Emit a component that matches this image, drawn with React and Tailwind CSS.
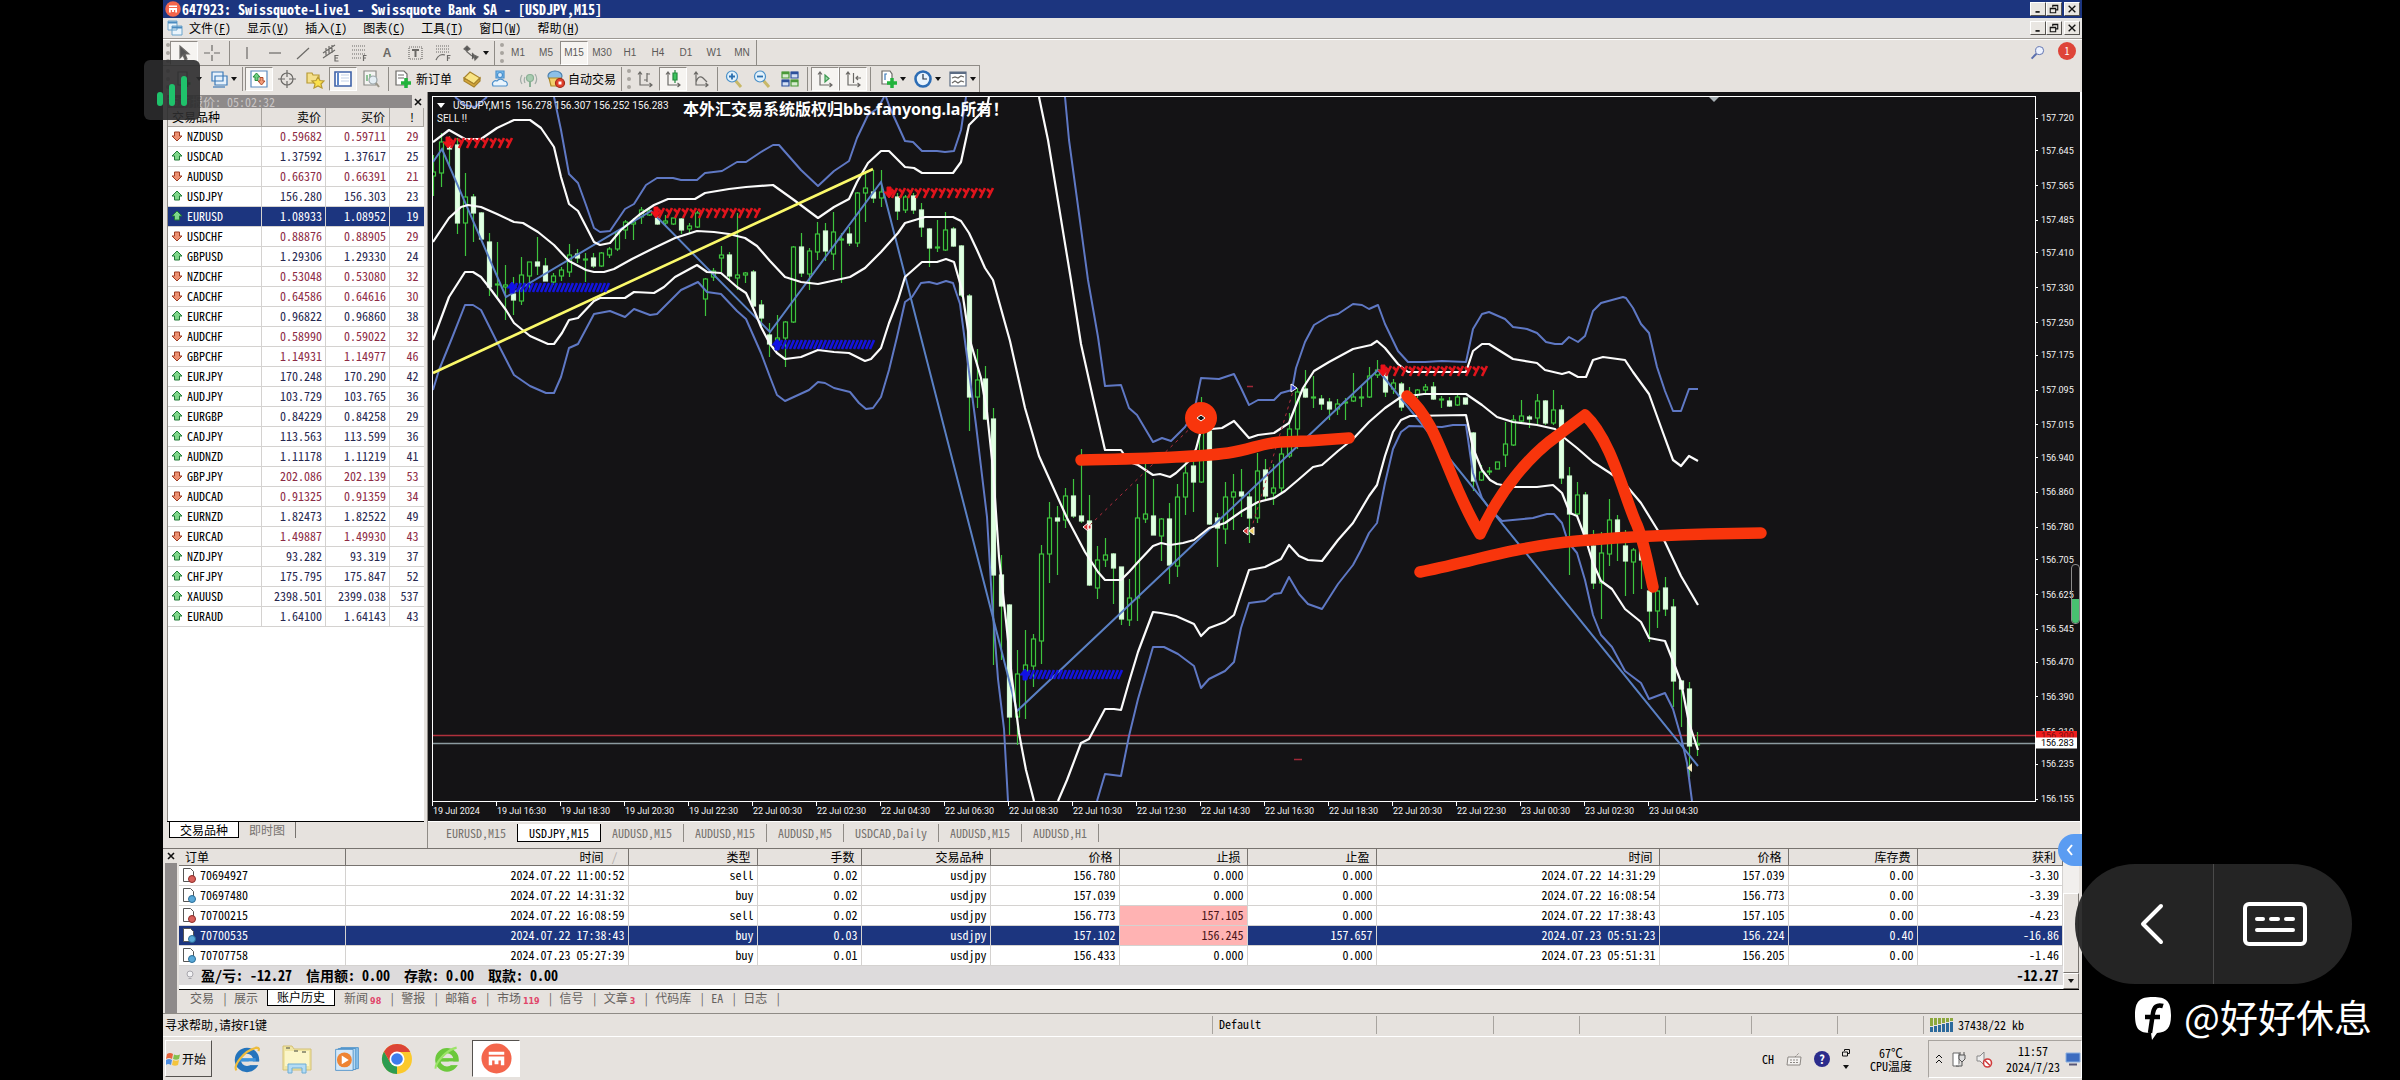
import React, { useState } from 'react';
import clsx from 'clsx';

const MONO = "font-['Noto_Sans_Mono_CJK_SC','Noto_Sans_CJK_SC',monospace]";

/* ---------- data ---------- */

const menus = [
  ['文件', 'F'], ['显示', 'V'], ['插入', 'I'], ['图表', 'C'], ['工具', 'T'], ['窗口', 'W'], ['帮助', 'H'],
];

const timeframes = ['M1', 'M5', 'M15', 'M30', 'H1', 'H4', 'D1', 'W1', 'MN'];

const quotes = [
  ['NZDUSD', '0.59682', '0.59711', 29, 'down'],
  ['USDCAD', '1.37592', '1.37617', 25, 'up'],
  ['AUDUSD', '0.66370', '0.66391', 21, 'down'],
  ['USDJPY', '156.280', '156.303', 23, 'up'],
  ['EURUSD', '1.08933', '1.08952', 19, 'up'],
  ['USDCHF', '0.88876', '0.88905', 29, 'down'],
  ['GBPUSD', '1.29306', '1.29330', 24, 'up'],
  ['NZDCHF', '0.53048', '0.53080', 32, 'down'],
  ['CADCHF', '0.64586', '0.64616', 30, 'down'],
  ['EURCHF', '0.96822', '0.96860', 38, 'up'],
  ['AUDCHF', '0.58990', '0.59022', 32, 'down'],
  ['GBPCHF', '1.14931', '1.14977', 46, 'down'],
  ['EURJPY', '170.248', '170.290', 42, 'up'],
  ['AUDJPY', '103.729', '103.765', 36, 'up'],
  ['EURGBP', '0.84229', '0.84258', 29, 'up'],
  ['CADJPY', '113.563', '113.599', 36, 'up'],
  ['AUDNZD', '1.11178', '1.11219', 41, 'up'],
  ['GBPJPY', '202.086', '202.139', 53, 'down'],
  ['AUDCAD', '0.91325', '0.91359', 34, 'down'],
  ['EURNZD', '1.82473', '1.82522', 49, 'up'],
  ['EURCAD', '1.49887', '1.49930', 43, 'down'],
  ['NZDJPY', '93.282', '93.319', 37, 'up'],
  ['CHFJPY', '175.795', '175.847', 52, 'up'],
  ['XAUUSD', '2398.501', '2399.038', 537, 'up'],
  ['EURAUD', '1.64100', '1.64143', 43, 'up'],
];

const chartTabs = [
  'EURUSD,M15', 'USDJPY,M15', 'AUDUSD,M15', 'AUDUSD,M15', 'AUDUSD,M5', 'USDCAD,Daily', 'AUDUSD,M15', 'AUDUSD,H1',
];

const orders = [
  ['70694927', '2024.07.22 11:00:52', 'sell', '0.02', 'usdjpy', '156.780', '0.000', '0.000', '2024.07.22 14:31:29', '157.039', '0.00', '-3.30'],
  ['70697480', '2024.07.22 14:31:32', 'buy', '0.02', 'usdjpy', '157.039', '0.000', '0.000', '2024.07.22 16:08:54', '156.773', '0.00', '-3.39'],
  ['70700215', '2024.07.22 16:08:59', 'sell', '0.02', 'usdjpy', '156.773', '157.105', '0.000', '2024.07.22 17:38:43', '157.105', '0.00', '-4.23'],
  ['70700535', '2024.07.22 17:38:43', 'buy', '0.03', 'usdjpy', '157.102', '156.245', '157.657', '2024.07.23 05:51:23', '156.224', '0.40', '-16.86'],
  ['70707758', '2024.07.23 05:27:39', 'buy', '0.01', 'usdjpy', '156.433', '0.000', '0.000', '2024.07.23 05:51:31', '156.205', '0.00', '-1.46'],
];

const orderHeads = ['订单', '时间', '类型', '手数', '交易品种', '价格', '止损', '止盈', '时间', '价格', '库存费', '获利'];

const terminalTabs = [
  ['交易'], ['展示'], ['账户历史'], ['新闻', 98], ['警报'], ['邮箱', 6], ['市场', 119], ['信号'], ['文章', 3], ['代码库'], ['EA'], ['日志'],
];

const prices = [
  157.72, 157.645, 157.565, 157.485, 157.41, 157.33, 157.25, 157.175, 157.095, 157.015, 156.94,
  156.86, 156.78, 156.705, 156.625, 156.545, 156.47, 156.39, 156.31, 156.235, 156.155,
];

const times = [
  '19 Jul 2024', '19 Jul 16:30', '19 Jul 18:30', '19 Jul 20:30', '19 Jul 22:30', '22 Jul 00:30', '22 Jul 02:30',
  '22 Jul 04:30', '22 Jul 06:30', '22 Jul 08:30', '22 Jul 10:30', '22 Jul 12:30', '22 Jul 14:30', '22 Jul 16:30',
  '22 Jul 18:30', '22 Jul 20:30', '22 Jul 22:30', '23 Jul 00:30', '23 Jul 02:30', '23 Jul 04:30',
];

// one row per bar: high, body top, body bottom, low, 1 = bearish (filled)
const candles = [
  [155, 172, 176, 196, 0], [133, 142, 173, 187, 0], [136, 146, 149, 165, 1], [138, 145, 223, 234, 1],
  [173, 197, 223, 256, 0], [194, 197, 213, 242, 1], [212, 213, 239, 240, 1], [233, 242, 287, 296, 1],
  [242, 284, 285, 297, 0], [265, 285, 287, 320, 0], [277, 294, 300, 315, 1], [257, 275, 301, 305, 0],
  [262, 262, 276, 290, 0], [237, 262, 266, 275, 1], [258, 266, 281, 281, 1], [273, 276, 282, 285, 0],
  [267, 270, 276, 281, 0], [244, 255, 272, 277, 0], [249, 254, 258, 263, 1], [253, 259, 260, 282, 0],
  [253, 258, 266, 268, 1], [252, 253, 266, 267, 0], [247, 249, 255, 258, 0], [230, 232, 249, 251, 0],
  [220, 222, 230, 239, 0], [218, 222, 224, 240, 0], [207, 210, 217, 224, 0], [207, 211, 215, 216, 0],
  [208, 217, 224, 225, 1], [215, 221, 223, 225, 0], [218, 218, 224, 225, 0], [218, 219, 230, 234, 1],
  [223, 226, 229, 234, 0], [211, 213, 227, 228, 0], [278, 279, 299, 316, 0], [268, 271, 277, 281, 0],
  [246, 255, 258, 272, 0], [252, 255, 276, 280, 1], [213, 275, 278, 290, 0], [272, 273, 275, 283, 0],
  [270, 272, 306, 307, 1], [300, 305, 318, 327, 1], [323, 335, 344, 357, 1], [315, 338, 340, 343, 0],
  [321, 322, 338, 367, 0], [246, 247, 322, 323, 0], [233, 247, 273, 277, 1], [248, 251, 274, 290, 0],
  [222, 234, 252, 260, 0], [223, 231, 251, 261, 1], [212, 232, 254, 270, 0], [233, 239, 240, 283, 0],
  [227, 234, 243, 246, 1], [192, 193, 243, 247, 0], [171, 188, 193, 222, 0], [170, 192, 198, 203, 1],
  [170, 192, 198, 207, 0], [187, 192, 194, 196, 0], [193, 197, 211, 220, 1], [195, 197, 210, 213, 0],
  [193, 196, 210, 214, 1], [203, 210, 227, 237, 1], [228, 229, 248, 267, 1], [220, 247, 248, 252, 0],
  [212, 230, 250, 251, 0], [227, 229, 246, 247, 1], [245, 246, 295, 297, 1], [294, 296, 397, 431, 1],
  [349, 380, 397, 408, 0], [366, 379, 419, 420, 1], [408, 419, 575, 665, 1], [555, 575, 606, 660, 1],
  [604, 605, 717, 735, 1], [650, 674, 717, 745, 0], [630, 665, 674, 719, 0], [634, 639, 666, 687, 0],
  [545, 554, 641, 664, 0], [502, 518, 554, 583, 0], [506, 518, 521, 575, 1], [488, 496, 520, 528, 0],
  [479, 496, 516, 518, 1], [449, 516, 521, 523, 1], [495, 521, 585, 586, 1], [546, 560, 588, 599, 0],
  [538, 555, 560, 567, 0], [553, 554, 568, 604, 1], [567, 567, 619, 625, 1], [579, 598, 620, 626, 0],
  [484, 518, 598, 621, 0], [459, 514, 519, 523, 0], [479, 516, 535, 535, 1], [518, 519, 536, 561, 0],
  [503, 519, 565, 584, 1], [484, 497, 566, 577, 0], [459, 473, 497, 515, 0], [456, 466, 482, 512, 1],
  [397, 422, 482, 483, 0], [429, 431, 524, 525, 1], [513, 518, 528, 567, 1], [482, 497, 529, 544, 0],
  [474, 492, 497, 530, 0], [469, 492, 496, 517, 1], [493, 497, 518, 543, 1], [453, 471, 518, 523, 0],
  [459, 470, 496, 501, 1], [464, 488, 493, 505, 0], [446, 454, 488, 494, 0], [413, 429, 456, 458, 0],
  [388, 392, 429, 449, 0], [370, 389, 397, 398, 1], [376, 397, 398, 408, 0], [395, 399, 404, 410, 1],
  [398, 402, 409, 420, 1], [399, 404, 409, 415, 0], [398, 402, 403, 420, 0], [373, 397, 401, 402, 0],
  [386, 397, 397, 407, 0], [367, 376, 397, 398, 0], [360, 370, 375, 378, 0], [369, 373, 392, 397, 1],
  [379, 383, 389, 394, 0], [382, 384, 407, 411, 1], [387, 393, 398, 399, 0], [389, 390, 395, 398, 0],
  [384, 387, 390, 394, 0], [382, 387, 399, 400, 1], [396, 399, 400, 408, 0], [397, 401, 406, 407, 1],
  [395, 397, 405, 406, 0], [398, 398, 404, 405, 1], [432, 433, 481, 491, 1], [465, 472, 480, 481, 0],
  [467, 471, 472, 475, 0], [462, 462, 469, 469, 0], [422, 444, 455, 467, 0], [415, 420, 445, 446, 0],
  [400, 416, 421, 422, 0], [415, 417, 419, 428, 1], [394, 401, 418, 424, 0], [400, 401, 423, 425, 1],
  [390, 410, 423, 425, 0], [405, 410, 478, 484, 1], [467, 476, 514, 575, 1], [482, 495, 514, 517, 0],
  [492, 495, 535, 537, 1], [530, 546, 583, 589, 1], [532, 553, 583, 619, 0], [499, 520, 554, 566, 0],
  [515, 520, 535, 561, 1], [530, 546, 561, 596, 1], [548, 550, 562, 594, 0], [549, 551, 560, 589, 1],
  [584, 591, 611, 642, 1], [589, 591, 611, 628, 0], [577, 588, 609, 616, 1], [599, 607, 681, 707, 1],
  [680, 681, 689, 727, 1], [682, 689, 746, 777, 1], [732, 744, 745, 756, 0],
];

const whiteBands = [
  '433,142 449,130 465,139 481,139 497,128 514,120 530,120 541,128 554,147 561,177 569,204 578,211 594,242 600,245 610,243 621,230 639,215 654,205 668,199 695,199 705,193 729,189 746,187 773,185 794,200 818,218 834,207 849,199 857,182 868,163 881,151 889,151 905,167 914,168 922,173 953,173 961,162 969,125 987,107 989,97',
  '1039,97 1048,140 1071,280 1081,344 1093,398 1105,450 1121,450 1129,462 1138,465 1153,475 1160,474 1170,477 1176,473 1189,461 1196,449 1201,430 1222,428 1234,421 1249,438 1258,435 1274,433 1289,423 1296,405 1303,388 1314,371 1329,362 1353,349 1371,345 1377,341 1385,348 1398,364 1408,372 1466,372 1473,351 1482,344 1489,344 1513,359 1537,363 1545,370 1562,374 1569,372 1578,377 1586,377 1593,360 1603,357 1625,360 1633,372 1649,394 1662,430 1673,460 1681,466 1689,456 1698,461',
  '433,242 449,218 461,207 468,205 481,207 497,214 514,222 523,223 538,232 554,245 569,261 586,270 594,272 604,272 614,269 632,259 654,248 675,238 697,231 714,232 729,234 745,238 757,246 770,261 785,277 801,282 818,284 841,279 850,277 865,268 881,252 898,233 905,223 925,217 953,217 961,221 969,233 977,250 985,268 993,280 1010,341 1025,408 1039,456 1067,518 1085,552 1098,572 1105,580 1121,580 1129,572 1138,562 1153,546 1161,543 1170,545 1183,543 1194,540 1209,528 1225,523 1242,511 1258,502 1274,498 1285,491 1298,480 1313,467 1322,465 1338,451 1353,439 1369,422 1385,408 1401,397 1424,394 1466,394 1482,405 1497,417 1513,422 1537,425 1555,429 1562,436 1577,448 1593,462 1610,473 1625,484 1641,503 1657,529 1665,542 1681,576 1698,605',
  '433,340 449,297 465,272 473,272 481,277 489,287 506,310 514,323 530,336 548,344 554,344 562,333 569,320 578,318 594,301 600,298 625,298 634,292 654,293 664,287 675,277 697,265 707,272 721,273 737,287 746,293 754,310 761,327 770,344 777,353 785,359 801,357 818,350 834,352 849,353 865,361 871,359 881,348 889,323 898,300 905,277 922,262 937,262 946,259 954,262 962,290 969,337 981,378 987,412 993,469 999,557 1006,621 1012,679 1019,733 1026,770 1034,801',
  '1058,801 1067,780 1081,743 1089,739 1105,709 1114,709 1121,710 1129,682 1138,652 1153,612 1161,613 1176,616 1194,624 1201,636 1209,628 1225,622 1234,615 1249,570 1265,567 1281,559 1289,545 1299,556 1308,560 1322,561 1338,540 1353,523 1369,496 1377,485 1385,456 1393,432 1401,420 1410,416 1466,415 1473,448 1482,470 1490,480 1497,484 1513,487 1537,487 1553,485 1562,493 1570,513 1577,516 1585,537 1593,563 1601,581 1612,589 1625,609 1641,622 1649,638 1665,641 1673,661 1681,682 1689,723 1698,750',
];

const blueBands = [
  '455,97 465,105 475,107 487,97',
  '554,97 561,130 569,174 578,183 586,205 594,228 600,232 610,231 625,209 634,204 646,185 657,178 673,178 681,180 697,180 705,173 722,171 737,162 746,162 761,152 773,145 779,145 801,170 818,186 834,171 849,161 857,138 868,115 878,108 884,97',
  '886,97 890,108 905,141 913,142 922,151 937,151 945,152 954,151 961,130 966,97',
  '1065,97 1069,140 1088,280 1098,337 1105,386 1121,385 1129,408 1137,415 1153,442 1162,438 1171,441 1185,427 1194,412 1201,378 1219,379 1234,374 1241,388 1249,405 1258,400 1274,400 1281,393 1292,390 1296,368 1305,342 1314,325 1329,316 1338,314 1353,304 1362,305 1369,309 1378,305 1385,324 1398,351 1408,362 1425,362 1442,361 1466,362 1473,329 1482,314 1489,312 1505,319 1513,327 1527,329 1537,333 1546,342 1555,344 1562,344 1569,337 1578,342 1585,336 1593,311 1601,303 1623,297 1626,298 1633,308 1641,324 1649,333 1657,367 1665,391 1673,411 1681,411 1689,389 1698,389',
  '433,390 439,370 452,338 465,305 473,305 481,310 497,342 514,375 530,386 546,393 554,393 561,377 569,348 578,344 594,314 610,311 625,317 634,309 650,315 657,314 681,290 698,282 707,292 721,294 737,311 746,319 761,353 770,377 777,395 785,401 809,390 818,382 825,383 834,388 850,392 859,403 866,409 873,408 881,397 889,370 897,337 905,302 912,297 921,283 929,282 937,284 946,281 953,283 960,304 968,364 976,425 987,517 992,601 998,679 1004,729 1008,801',
  '1097,801 1105,774 1121,776 1129,736 1138,699 1153,647 1164,647 1178,654 1194,666 1201,688 1209,679 1225,671 1234,662 1241,628 1249,603 1265,601 1274,594 1281,593 1289,577 1299,594 1308,604 1322,609 1338,584 1353,565 1361,550 1369,533 1377,523 1385,483 1393,449 1401,432 1409,426 1442,427 1453,425 1466,425 1470,453 1473,473 1482,498 1489,508 1502,521 1533,518 1547,514 1554,514 1562,523 1568,542 1577,553 1585,580 1593,615 1601,635 1612,647 1625,671 1641,683 1649,699 1657,696 1665,693 1673,709 1681,737 1687,763 1692,801',
];

const zigzag = '433,162 442,149 506,297 651,211 770,332 881,182 1017,711 1378,370 1698,766';

// signal trails: x, y, number of marks, colour
const trails = [
  [448, 143, 8, 'red'], [656, 213, 13, 'red'], [889, 193, 13, 'red'], [1383, 371, 13, 'red'],
  [512, 287, 12, 'blue'], [777, 344, 12, 'blue'], [1025, 674, 12, 'blue'],
];

const priceTop = (price) => `${(((157.72 - price) * 434 + 22) / 704) * 100}%`;

/* ---------- small pieces ---------- */

const Icon = ({ size = 'w-5 h-5', children }) => (
  <svg viewBox="0 0 20 20" className={clsx(size, 'shrink-0')} fill="none" stroke="#6b6966" strokeWidth="1.2">
    {children}
  </svg>
);

const Caret = () => (
  <svg viewBox="0 0 6 4" className="w-1.5 h-1 shrink-0"><path d="M0 0h6L3 4z" fill="#111" /></svg>
);

const Grip = () => <span className="w-[7px] h-5 shrink-0 border-r-4 border-dotted border-[#a8a49f]" />;

const Sep = ({ wide }) => (
  <span className={clsx('h-6 shrink-0 flex justify-center', wide ? 'w-[7px]' : 'w-[5px]')}>
    <i className="border-l border-[#8f8b86]" />
  </span>
);

const ToolButton = ({ label, active, caret, children }) => (
  <button
    aria-label={label}
    className={clsx(
      'shrink-0 h-6 flex items-center justify-center gap-0.5',
      caret ? 'w-[35px]' : 'w-7',
      active && 'bg-[#f6f4f1] border border-t-[#8f8b86] border-l-[#8f8b86] border-white'
    )}
  >
    {children}
    {caret && <Caret />}
  </button>
);

const WinButtons = () => (
  <div className="flex text-black">
    {[
      ['最小化', <path key="a" d="M3 9.500h5" strokeWidth="2" />],
      ['还原', <path key="b" d="M4.500 4V1.500H10.500V7H8M4.500 2h6M1.500 5H8v5.500H1.500zM1.500 5.500H8" />],
      ['关闭', <path key="c" d="M2 2l8 8M10 2l-8 8" strokeWidth="1.600" />],
    ].map(([label, glyph]) => (
      <button
        key={label}
        aria-label={label}
        className="w-4 h-3.5 last:ml-0.5 flex items-center justify-center bg-[#e9e6e2] border border-white border-r-[#55524f] border-b-[#55524f]"
      >
        <svg viewBox="0 0 12 12" className="w-2.5 h-2.5" fill="none" stroke="#111" strokeWidth="1.3">{glyph}</svg>
      </button>
    ))}
  </div>
);

const MetaLogo = ({ size }) => (
  <svg viewBox="0 0 32 32" className={size}>
    <circle cx="16" cy="16" r="15.500" fill="#f4664c" />
    <path d="M8 9h16v3H8zM8 14h16v9h-3.500v-5H18v4h-4v-4h-2.500v5H8z" fill="#fff" />
  </svg>
);

const DirArrow = ({ dir }) => (
  <svg viewBox="0 0 12 12" className="w-3 h-3">
    {dir === 'up' ? (
      <path d="M6 1l5 5H8.500v4h-5V6H1z" fill="#7fd88a" stroke="#1f7a35" />
    ) : (
      <path d="M6 11L1 6h2.500V2h5v4H11z" fill="#ee9070" stroke="#9c3b22" />
    )}
  </svg>
);

const OrderIcon = ({ buy }) => (
  <svg viewBox="0 0 14 16" className="w-3.5 h-4 shrink-0">
    <path d="M1.500 1.500h7l3 3v10h-10z" fill="#fff" stroke="#555" />
    <circle cx="10" cy="12" r="3.500" fill={buy ? '#58a8d8' : '#d8605a'} stroke={buy ? '#2a6c96' : '#8c2b26'} />
  </svg>
);

/* ---------- window chrome ---------- */

const TitleBar = () => (
  <div className="h-[18px] bg-[#1c357f] flex items-center justify-between pl-0.5 pr-0.5">
    <div className="flex items-center text-white">
      <MetaLogo size="w-4 h-4" />
      <h1 className="pl-px text-sm leading-[18px] font-bold whitespace-pre">647923: Swissquote-Live1 - Swissquote Bank SA - [USDJPY,M15]</h1>
    </div>
    <WinButtons />
  </div>
);

const MenuBar = () => (
  <div className="h-[21px] bg-[#e6e4e2] border-b border-[#9c9893] flex items-center justify-between pl-1 pr-0.5">
    <nav className="flex items-center gap-4">
      <svg viewBox="0 0 16 16" className="w-4 h-4 -mr-2.5">
        <path d="M1 1h9v9H1zM5 6h10v9H5z" fill="#eaf4fb" stroke="#6aa4cc" />
        <path d="M1 2.500h9M5 7.500h10" stroke="#4c8cc0" strokeWidth="2" />
      </svg>
      {menus.map(([name, key]) => (
        <button key={key} className="text-xs">{name}(<u>{key}</u>)</button>
      ))}
    </nav>
    <WinButtons />
  </div>
);

const DrawToolbar = () => (
  <div className="h-[26px] flex items-center justify-between border-t border-white">
    <div className="flex items-center h-[26px] border-r border-[#8f8b86]">
      <Grip />
      <ToolButton label="光标" active><Icon><path d="M6 3v12l3-3 2 5 2-1-2-5h4z" fill="#555" /></Icon></ToolButton>
      <ToolButton label="十字准线"><Icon><path d="M10 2v6M10 12v6M2 10h6M12 10h6" /></Icon></ToolButton>
      <Sep wide />
      <ToolButton label="垂直线"><Icon><path d="M10 4v12" /></Icon></ToolButton>
      <ToolButton label="水平线"><Icon><path d="M4 10h12" /></Icon></ToolButton>
      <ToolButton label="趋势线"><Icon><path d="M4 16L16 5" /></Icon></ToolButton>
      <ToolButton label="通道">
        <Icon><path d="M2 10l12-8M2 15l12-8M5 5v9M8 3v9M11 2v8M17.500 12.500h-3.500v5.500h3.500M14 15h3" /></Icon>
      </ToolButton>
      <ToolButton label="斐波那契">
        <Icon><path d="M3 3h14M3 7h14M3 11h14M3 15h9" strokeDasharray="1 1" /><path d="M14.500 18v-5.500h3M14.500 15h2.500" /></Icon>
      </ToolButton>
      <ToolButton label="文字"><span className="font-['Liberation_Sans',sans-serif] font-bold text-xs text-[#6b6966]">A</span></ToolButton>
      <ToolButton label="文本标签">
        <Icon><path d="M4 4h13v12H4z" strokeDasharray="1 1" /><path d="M7 7h7M10.500 7v7" strokeWidth="2" /></Icon>
      </ToolButton>
      <ToolButton label="斐波扇形">
        <Icon><path d="M3 3h14M3 6h14M3 9h14" strokeDasharray="1 1" /><path d="M3 17c2-5 6-6 9-5M14.500 18v-5.500h3M14.500 15h2.500" /></Icon>
      </ToolButton>
      <ToolButton label="箭头" caret>
        <Icon><path d="M3 6l3-3 3 3-3 2zM5 8l6 5M11 10l3 3-3 3M13 12l4 2-3 3z" fill="#555" /></Icon>
      </ToolButton>
      <Sep />
      <Grip />
      {timeframes.map((tf) => (
        <button
          key={tf}
          className={clsx(
            "w-7 h-6 shrink-0 font-['Liberation_Sans',sans-serif] text-[10px] text-[#5c5a58]",
            tf === 'M15' && 'bg-[#f6f4f1] border border-t-[#8f8b86] border-l-[#8f8b86] border-white'
          )}
        >
          {tf}
        </button>
      ))}
    </div>
    <div className="flex items-center gap-3 pr-1.5">
      <button aria-label="搜索">
        <Icon size="w-4 h-4"><circle cx="12" cy="7" r="5" stroke="#5b6fae" fill="#eef3ff" /><path d="M8 11l-6 6" stroke="#5b6fae" strokeWidth="2.500" /></Icon>
      </button>
      <button aria-label="通知" className="w-[18px] h-[18px] mb-1 rounded-full bg-[#de4438] text-white text-[10px] leading-4">1</button>
    </div>
  </div>
);

const MainToolbar = () => (
  <div className="h-[27px] flex items-center">
    <div className="flex items-center h-[27px] border-t border-r border-[#8f8b86]">
      <Grip />
      <ToolButton label="新图表" caret><Icon><path d="M4 3h9v13H4z" fill="#fff" /><path d="M13 11v7M9.500 14.500h7" stroke="#20a040" strokeWidth="2.500" /></Icon></ToolButton>
      <ToolButton label="配置文件" caret>
        <Icon><path d="M3 3h11v9H3zM6 7h12v9H6z" fill="#e6f1fb" stroke="#3c7ab8" /><path d="M4 18h12" stroke="#3c7ab8" /></Icon>
      </ToolButton>
      <Sep />
      <ToolButton label="市场报价" active>
        <Icon><path d="M2 2h16v16H2z" fill="#fff" stroke="#5a8ac0" /><path d="M7.500 4l3.500 4H9v3.500H6V8H4z" fill="#6cd080" stroke="#2a8a3c" strokeWidth="1" /><path d="M12.500 16L9 12h2V8.500h3V12h2z" fill="#f09c78" stroke="#b04c2c" strokeWidth="1" /></Icon>
      </ToolButton>
      <ToolButton label="数据窗口"><Icon><circle cx="10" cy="10" r="6" /><path d="M10 1v7M10 12v7M1 10h7M12 10h7" /></Icon></ToolButton>
      <ToolButton label="导航">
        <Icon><path d="M2 4h5l1 2h6v8H2z" fill="#f5e08c" stroke="#b89a34" /><path d="M13 8l2 3.500 4 .5-3 3 1 4-4-2-4 2 1-4-3-3 4-.5z" fill="#fbe04c" stroke="#b89a34" /></Icon>
      </ToolButton>
      <ToolButton label="终端" active><Icon><path d="M2 3h16v14H2z" fill="#fff" stroke="#3f62a8" strokeWidth="1.600" /><path d="M5 4v12" stroke="#5c86c8" strokeWidth="2" /><path d="M8 6h8M8 9h8M8 12h8" stroke="#c4d2e8" /></Icon></ToolButton>
      <ToolButton label="策略测试">
        <Icon><path d="M3 2h12v14H3z" fill="#f4f4f2" stroke="#8a8a86" /><path d="M6 12V6M9 10V5" stroke="#48a058" /><circle cx="12" cy="11" r="4" fill="#e4eef4" stroke="#9aa4a8" /><path d="M15 14l3 4" stroke="#9a9688" strokeWidth="2" /></Icon>
      </ToolButton>
      <Sep wide />
      <button className="flex items-center h-6 w-[66px] text-xs whitespace-nowrap">
        <Icon><path d="M4 2h8l3 3v11H4z" fill="#fff" /><path d="M6 6h6M6 9h6" /><path d="M14 9v10M9 14h10" stroke="#22b33c" strokeWidth="3.500" /></Icon>
        <span className="pl-1">新订单</span>
      </button>
      <ToolButton label="编辑器"><Icon><path d="M2 9l6-6 10 6-6 6z" fill="#f9e484" stroke="#a8842c" /><path d="M2 9v3l10 6 6-6V9l-6 6z" fill="#d8a83c" stroke="#a8842c" /></Icon></ToolButton>
      <ToolButton label="虚拟主机"><Icon><path d="M6 2h8v7H6z" fill="#7cc0f0" stroke="#4c90cc" /><circle cx="10" cy="6" r="2.500" fill="#dcecfa" stroke="#4c90cc" /><path d="M3 17c-2-4 2-6 4-5 2-3 6-2 7 0 4 0 4 5 2 5z" fill="#eaf5fd" stroke="#4c90cc" /></Icon></ToolButton>
      <ToolButton label="信号"><Icon><path d="M4 6c-2 3-2 6 0 9M7 8c-1 2-1 4 0 6M17 5c2 3 2 7 0 10" stroke="#a0aca6" /><circle cx="12" cy="9" r="3.500" fill="#a8ccb0" stroke="#8ab094" /><path d="M12 12v6" stroke="#8ab094" strokeWidth="2" /></Icon></ToolButton>
      <button className="flex items-center h-6 w-[77px] pl-1 text-xs whitespace-nowrap">
        <Icon><ellipse cx="9" cy="7" rx="7" ry="5" fill="#8cc0e8" stroke="#4a80b0" /><path d="M3 9h12l-2 8H5z" fill="#f2d06c" stroke="#b08a28" /><circle cx="14" cy="14" r="4.500" fill="#e0402c" stroke="#a02818" /><path d="M12.500 12.500h3v3h-3z" fill="#fff" stroke="none" /></Icon>
        <span className="pl-0.5">自动交易</span>
      </button>
      <Sep />
      <Grip />
      <ToolButton label="柱状图"><Icon><path d="M5 3v13h12M3 5.500l2-2.500 2 2.500M14.500 14l2.500 2-2.500 2M12 4v9M12 5h3M9 11h3" /></Icon></ToolButton>
      <ToolButton label="蜡烛图" active><Icon><path d="M5 3v13h12M3 5.500l2-2.500 2 2.500M14.500 14l2.500 2-2.500 2" /><path d="M12 1v13" stroke="#22883c" /><path d="M10 4h4v7h-4z" fill="#3cc45c" stroke="#22883c" /></Icon></ToolButton>
      <ToolButton label="折线图"><Icon><path d="M5 3v13h12M3 5.500l2-2.500 2 2.500M14.500 14l2.500 2-2.500 2M5 13c2-6 5-6 7-4l4 4" /></Icon></ToolButton>
      <Sep />
      <ToolButton label="放大"><Icon><path d="M11 11l6 7" stroke="#c8b868" strokeWidth="3" /><circle cx="8" cy="7.500" r="5.500" fill="#e2f1fb" stroke="#4a90c8" /><path d="M5 7.500h6M8 4.500v6" stroke="#2c70b0" strokeWidth="1.800" /></Icon></ToolButton>
      <ToolButton label="缩小"><Icon><path d="M11 11l6 7" stroke="#c8b868" strokeWidth="3" /><circle cx="8" cy="7.500" r="5.500" fill="#e2f1fb" stroke="#4a90c8" /><path d="M5 7.500h6" stroke="#2c70b0" strokeWidth="1.800" /></Icon></ToolButton>
      <ToolButton label="平铺窗口">
        <Icon><path d="M2 3h7v6H2zM11 11h7v6h-7z" fill="#d8ecd0" stroke="#4a9838" /><path d="M11 3h7v6h-7zM2 11h7v6H2z" fill="#d4e0f4" stroke="#2c509c" /><path d="M2 4h7M11 12h7" stroke="#4a9838" strokeWidth="2.500" /><path d="M11 4h7M2 12h7" stroke="#2c509c" strokeWidth="2.500" /></Icon>
      </ToolButton>
      <Sep wide />
      <ToolButton label="自动滚动" active><Icon><path d="M5 3v13h12M3 5.500l2-2.500 2 2.500M14.500 14l2.500 2-2.500 2" /><path d="M10 6l4 3.500-4 3.500z" fill="#9cd8a8" stroke="#3c9850" /></Icon></ToolButton>
      <ToolButton label="图表平移" active><Icon><path d="M5 3v13h12M3 5.500l2-2.500 2 2.500M14.500 14l2.500 2-2.500 2M10.500 4v10M18 9h-5M15 7l-2 2 2 2" /></Icon></ToolButton>
      <Sep wide />
      <ToolButton label="技术指标" caret><Icon><path d="M4 2h8l2 3v10H4z" fill="#fff" /><path d="M9 5H7v6" stroke="#3c7ab8" /><path d="M14 9v10M9 14h10" stroke="#22b33c" strokeWidth="3.500" /></Icon></ToolButton>
      <ToolButton label="时间周期" caret><Icon><circle cx="10" cy="10" r="7.500" fill="#e8f3fc" stroke="#2c6cb4" strokeWidth="2.600" /><path d="M10 5v5h4" stroke="#234" /></Icon></ToolButton>
      <ToolButton label="模板" caret><Icon><path d="M2 3h16v14H2z" fill="#fff" stroke="#5c6c84" /><path d="M2 4h16" stroke="#5c6c84" strokeWidth="2" /><path d="M4 9l3-1 3 1 3-2 3 1M4 14l3-2 3 2 3-2 3 1" /></Icon></ToolButton>
    </div>
  </div>
);

/* ---------- market watch ---------- */

const MarketWatch = () => {
  const [selected, setSelected] = useState('EURUSD');

  return (
    <section className="w-[265px] shrink-0 flex flex-col pl-1 pr-[3px] pt-[3px] pb-1 border-r border-[#8f8b86]">
      <div className="flex items-center h-[13px]">
        <h2 className="flex-1 bg-[#8e8a8a] text-[#c9c5c5] text-xs leading-[13px] whitespace-pre">市场报价: 05:02:32</h2>
        <button aria-label="关闭" className="w-3 flex justify-center">
          <svg viewBox="0 0 8 8" className="w-2 h-2"><path d="M1 1l6 6M7 1L1 7" stroke="#111" strokeWidth="1.600" /></svg>
        </button>
      </div>
      <div className="flex-1 bg-white border-l border-[#8f8b86]">
        <table className="w-full table-fixed text-xs leading-none">
          <colgroup>
            <col />
            <col className="w-16" />
            <col className="w-16" />
            <col className="w-[34px]" />
          </colgroup>
          <thead>
            <tr className="h-[18px] bg-[#e6e2de]">
              <th className="font-normal text-left pl-1 border-r border-b border-[#a8a49f]">交易品种</th>
              <th className="font-normal text-right pr-1 border-r border-b border-[#a8a49f]">卖价</th>
              <th className="font-normal text-right pr-1 border-r border-b border-[#a8a49f]">买价</th>
              <th className="font-normal text-right pr-2 border-r border-b border-[#a8a49f]">!</th>
            </tr>
          </thead>
          <tbody>
            {quotes.map(([symbol, bid, ask, spread, dir]) => {
              const active = symbol === selected;
              return (
                <tr
                  key={symbol}
                  onClick={() => setSelected(symbol)}
                  className={clsx(
                    'h-5 border-b border-[#d4d2d0]',
                    active ? 'bg-[#1c357f] text-white' : dir === 'up' ? 'text-[#26264e]' : 'text-[#8c2a44]'
                  )}
                >
                  <td className="border-r border-[#d4d2d0]">
                    <span className={clsx('flex items-center gap-1 pl-[3px]', !active && 'text-black')}>
                      <DirArrow dir={dir} />
                      {symbol}
                    </span>
                  </td>
                  <td className="text-right pr-[3px] border-r border-[#d4d2d0]">{bid}</td>
                  <td className="text-right pr-[3px] border-r border-[#d4d2d0]">{ask}</td>
                  <td className="text-right pr-[5px]">{spread}</td>
                </tr>
              );
            })}
          </tbody>
        </table>
      </div>
      <div className="flex items-start h-[23px] border-t border-black text-xs">
        <button className="h-4 px-2.5 ml-0.5 bg-white border border-t-0 border-black leading-[14px]">交易品种</button>
        <button className="h-4 px-2.5 leading-4 text-[#77736f] border-r border-[#77736f]">即时图</button>
      </div>
    </section>
  );
};

/* ---------- chart ---------- */

const Trail = ({ x, y, count, color }) => {
  const red = color === 'red';
  return (
    <g transform={`translate(${x} ${y})`} stroke={red ? '#e0141c' : '#1414dc'} strokeWidth="2.600" fill="none">
      <path d={red ? 'M-5 -1h3v-5h4v5h3L0 5z' : 'M-5 1h3v5h4v-5h3L0 -5z'} fill={red ? '#f01018' : '#1010e8'} strokeWidth="1" />
      {Array.from({ length: count }, (_, i) => (
        <path key={i} d={red ? `M${2 + i * 8} -4l3 3M${8 + i * 8} -5l-5 10` : `M${1 + i * 8} 5l4 -9M${5 + i * 8} 5l4 -9`} />
      ))}
    </g>
  );
};

const PriceChart = () => (
  <svg viewBox="433 97 1602 704" preserveAspectRatio="none" className="absolute inset-0 w-full h-full" fill="none">
    <path d="M433 735.500H2035" stroke="#b0303c" strokeWidth="1.500" />
    <path d="M433 743.500H2035" stroke="#8c9aa0" strokeWidth="1.500" />
    <g strokeWidth="1.200">
      {candles.map(([high, top, bottom, low, filled], i) => {
        const x = 433.5 + i * 8;
        return (
          <g key={i} stroke="#3ec43e">
            <path d={`M${x} ${high}V${top}M${x} ${bottom}V${low}`} />
            <rect x={x - 2} y={top} width="4" height={Math.max(bottom - top, 1)} fill={filled ? '#e2ffe4' : '#0b1a0d'} stroke={filled ? '#d0f8d2' : '#3ec43e'} />
          </g>
        );
      })}
    </g>
    <g stroke="#5f78c4" strokeWidth="2" strokeLinejoin="round">
      {blueBands.map((points) => <polyline key={points} points={points} />)}
    </g>
    <polyline points={zigzag} stroke="#5a80c4" strokeWidth="2" />
    <g stroke="#fbfbfb" strokeWidth="2.200" strokeLinejoin="round">
      {whiteBands.map((points) => <polyline key={points} points={points} />)}
    </g>
    <path d="M433 373L873 169" stroke="#fbf96a" strokeWidth="2.600" />
    {trails.map(([x, y, count, color]) => <Trail key={`${x}-${y}`} x={x} y={y} count={count} color={color} />)}
    <path d="M1090 525L1153 464L1201 418M1251 530L1294 388" stroke="#b02c3c" strokeDasharray="3 4" />
    <path d="M1247 386.500h6M1294 759.500h8" stroke="#a02838" strokeWidth="1.500" />
    <path d="M1083 527l5-4v8zM1088 525h3v4h-3z" fill="#d83030" stroke="#fff" />
    <path d="M1243 531l5-4v8z" fill="#d83030" stroke="#fff" />
    <path d="M1249 531l5-4v8z" fill="#f0d060" stroke="#fff" />
    <path d="M1297 388l-6-4v8z" fill="#3040d0" stroke="#fff" />
    <path d="M1687 768l5-5v9z" fill="#f4ecc0" />
    <path d="M1709 97h10l-5 5z" fill="#a8b0b4" />
    {/* hand-drawn marks */}
    <g stroke="#f8350c" strokeWidth="11.500" strokeLinecap="round" strokeLinejoin="round">
      <path d="M1081 460C1128 459 1190 458 1228 453C1250 450 1262 443 1280 442L1308 441L1349 438" />
      <path d="M1407 396C1440 425 1445 475 1480 534C1500 490 1530 455 1557 436L1585 415C1612 440 1625 500 1637 525C1645 545 1648 565 1653 587" />
      <path d="M1420 572C1470 562 1520 546 1577 541C1610 538 1680 534 1761 533" />
    </g>
    <circle cx="1201" cy="418" r="16" fill="#f8350c" />
    <path d="M1197 418l4-3 4 3-4 3z" fill="#111" stroke="#fff" />
  </svg>
);

const ChartPanel = () => (
  <section className="flex-1 min-w-0 flex flex-col border-r-2 border-white">
    <div className="flex-1 flex flex-col bg-[#141315] text-[#f4f4f4] font-['Roboto',sans-serif] text-[9px] pt-1 pl-1">
      <div className="flex-1 flex min-h-[400px]">
        <div className="relative flex-1 border border-white overflow-hidden">
          <PriceChart />
          <div className="absolute left-1 top-0.5 text-[10px] leading-[13px]">
            <p className="flex items-center gap-2 whitespace-pre">
              <svg viewBox="0 0 8 5" className="w-2 h-[5px]"><path d="M0 0h8L4 5z" fill="#fff" /></svg>
              USDJPY,M15  156.278 156.307 156.252 156.283
            </p>
            <p>SELL !!</p>
          </div>
          <p className="absolute left-[250px] top-0.5 font-['Noto_Sans','Noto_Sans_CJK_SC',sans-serif] text-base leading-5 font-bold text-white whitespace-nowrap">
            本外汇交易系统版权归bbs.fanyong.la所有！
          </p>
        </div>
        <div className="relative w-11 shrink-0">
          {prices.map((price) => (
            <span
              key={price}
              className="absolute left-0 -translate-y-1/2 flex items-center gap-[3px] leading-3"
              style={{ top: priceTop(price) }}
            >
              <i className="w-0.5 h-px bg-white" />
              {price.toFixed(3)}
            </span>
          ))}
          <span className="absolute left-0 right-[3px] -translate-y-1/2 h-2.5 leading-2.5 pl-[5px] bg-[#ee1c1c] text-[#7c1010]" style={{ top: priceTop(156.3) }}>156.300</span>
          <span className="absolute left-0 right-[3px] -translate-y-1/2 h-[11px] leading-[11px] pl-[5px] bg-white text-black" style={{ top: priceTop(156.283) }}>156.283</span>
          <span className="absolute right-0 top-[468px] w-[9px] h-[60px] rounded border border-[#8c8c8c] flex items-end">
            <i className="w-full h-6 rounded-b bg-[#48c070]" />
          </span>
        </div>
      </div>
      <div className="relative h-[19px] mr-11">
        {times.map((time, i) => (
          <span key={time} className="absolute top-0 border-l border-white h-1" style={{ left: `${(i * 64 * 100) / 1604}%` }}>
            <span className="block pt-0.5 leading-[14px] whitespace-nowrap">{time}</span>
          </span>
        ))}
      </div>
    </div>
    <div className="flex items-start h-[27px] pt-0.5 pl-[7px] border-t border-white text-xs">
      {chartTabs.map((tab, i) => (
        <button
          key={i}
          className={clsx(
            'h-[18px] px-[11px] leading-4',
            i === 1 ? 'bg-white text-black border-b border-r border-l border-black' : 'text-[#77736f] border-r border-[#8f8b86]',
            i === 0 && 'border-r-0'
          )}
        >
          {tab}
        </button>
      ))}
    </div>
  </section>
);

/* ---------- terminal ---------- */

const Terminal = () => (
  <section className="flex bg-[#e6e2de] border-t border-[#77736f] pr-[3px]">
    <div className="w-4 shrink-0 flex flex-col items-center">
      <button aria-label="关闭终端" className="h-3.5">
        <svg viewBox="0 0 8 8" className="w-2 h-2"><path d="M1 1l6 6M7 1L1 7" stroke="#111" strokeWidth="1.600" /></svg>
      </button>
      <div className="flex-1 w-3 bg-[#8e8a8a]" />
    </div>
    <div className="flex-1 min-w-0">
      <div className="flex border-b border-black bg-white">
        <table className="flex-1 w-full table-fixed text-xs leading-none">
          <colgroup>
            <col className="w-[166px]" />
            <col className="w-[283px]" />
            <col className="w-[129px]" />
            <col className="w-[104px]" />
            <col className="w-[129px]" />
            <col className="w-[129px]" />
            <col className="w-[128px]" />
            <col className="w-[129px]" />
            <col className="w-[283px]" />
            <col className="w-[129px]" />
            <col className="w-[129px]" />
            <col />
          </colgroup>
          <thead>
            <tr className="h-4 bg-[#e6e2de]">
              {orderHeads.map((head, i) => (
                <th
                  key={i}
                  className={clsx(
                    'font-normal px-1.5 border-r border-b border-[#77736f]',
                    i === 0 ? 'text-left' : 'text-right'
                  )}
                >
                  {head}
                  {i === 1 && <span className="pl-2 pr-1 text-[#b0aca8]">/</span>}
                </th>
              ))}
            </tr>
          </thead>
          <tbody>
            {orders.map((row, r) => (
              <tr key={row[0]} className={clsx('h-5 border-b border-[#d4d2d0]', r === 3 && 'bg-[#1c357f] text-white')}>
                {row.map((cell, i) => (
                  <td
                    key={i}
                    className={clsx(
                      'px-[3px] border-r border-[#d4d2d0]',
                      i > 0 && 'text-right',
                      i === 6 && r > 1 && r < 4 && 'bg-[#ffb3b3] text-[#4a1418]'
                    )}
                  >
                    {i === 0 ? <span className="flex items-center gap-1"><OrderIcon buy={row[2] === 'buy'} />{cell}</span> : cell}
                  </td>
                ))}
              </tr>
            ))}
          </tbody>
          <tfoot>
            <tr className="h-5 bg-[#dddbdc] text-sm leading-none font-bold">
              <td colSpan={11} className="pl-1.5">
                <span className="flex items-center gap-1.5 whitespace-pre">
                  <svg viewBox="0 0 10 10" className="w-2.5 h-2.5"><circle cx="5" cy="4" r="3" fill="#f2f2f4" stroke="#a8a6ac" /><path d="M3.500 8.500h3" stroke="#a8a6ac" /></svg>
                  盈/亏: -12.27  信用额: 0.00  存款: 0.00  取款: 0.00
                </span>
              </td>
              <td className="text-right pr-1">-12.27</td>
            </tr>
            <tr className="h-1"><td colSpan={12} /></tr>
          </tfoot>
        </table>
        <div className="w-4 shrink-0 flex flex-col pt-4 bg-[#f1efed]">
          <div className="h-7" />
          <div className="flex-1 bg-[#e6e2de] border border-white border-r-[#77736f] border-b-[#77736f]" />
          <button aria-label="向下" className="h-4 flex items-center justify-center bg-[#e6e2de] border border-white border-r-[#77736f] border-b-[#77736f]"><Caret /></button>
        </div>
      </div>
      <div className="flex items-start h-[23px] pl-0.5 text-xs leading-4">
        {terminalTabs.map(([name, count], i) => (
          <button
            key={name}
            className={clsx(
              'flex items-end h-4 px-[9px]',
              i === 2 ? 'bg-white border border-t-0 border-black' : 'text-[#66625e]'
            )}
          >
            {name}
            {count && <sub className="pl-0.5 bottom-0 font-['DejaVu_Sans',sans-serif] font-bold text-[8px] leading-2 text-[#e0466a]">{count}</sub>}
            {i !== 2 && i !== 1 && <span className="pl-2 -mr-3">|</span>}
          </button>
        ))}
      </div>
    </div>
  </section>
);

const StatusBar = () => (
  <footer className="h-6 flex items-center bg-[#e6e2de] border-t border-[#8f8b86] border-b border-b-white text-xs">
    <p className="flex-1 pl-0.5">寻求帮助,请按F1键</p>
    <p className="w-[164px] h-[18px] pl-1.5 border-l border-[#a8a49f]">Default</p>
    <span className="w-[117px] h-[18px] border-l border-[#a8a49f]" />
    <span className="w-[86px] h-[18px] border-l border-[#a8a49f]" />
    <span className="w-[86px] h-[18px] border-l border-[#a8a49f]" />
    <span className="w-[86px] h-[18px] border-l border-[#a8a49f]" />
    <span className="w-[86px] h-[18px] border-l border-[#a8a49f]" />
    <span className="w-[86px] h-[18px] border-l border-[#a8a49f]" />
    <p className="w-[159px] h-[18px] pl-1.5 border-l border-[#a8a49f] flex items-center gap-1">
      <svg viewBox="0 0 24 14" className="w-6 h-3.5">
        <path d="M0 0h3v8H0zM4 0h3v7H4zM8 0h3v6H8zM12 0h3v5h-3zM16 0h3v4h-3zM20 0h3v3h-3z" fill="#8ca83c" />
        <path d="M0 9h3v5H0zM4 8h3v6H4zM8 7h3v7H8zM12 6h3v8h-3zM16 5h3v9h-3zM20 4h3v10h-3z" fill="#2c6a9c" />
      </svg>
      37438/22 kb
    </p>
  </footer>
);

/* ---------- task bar ---------- */

const TaskBar = () => (
  <div className="h-[43px] flex items-center justify-between bg-[#e6e2de] text-xs">
    <div className="flex items-center">
      <button className="ml-0.5 w-[47px] h-[37px] flex items-center border border-white border-r-[#55524f] border-b-[#55524f]">
        <svg viewBox="0 0 16 16" className="w-4 h-4">
          <path d="M1 3c2-1.500 4-1.500 6 0L6 8C4 6.500 2 6.500 0 8z" fill="#e8643c" />
          <path d="M8 3.500c2 1 4 1 6 0L13 8c-2 1-4 1-6 0z" fill="#84c04c" />
          <path d="M0 9c2-1.500 4-1.500 6 0l-1 5c-2-1.500-4-1.500-5 0z" fill="#4c8ce0" />
          <path d="M7 9c2 1 4 1 6 0l-1 5c-2 1-4 1-6 0z" fill="#f4c43c" />
        </svg>
        开始
      </button>
      <div className="flex items-center pl-2.5">
        <button aria-label="Internet Explorer" className="w-[50px] flex justify-center">
          <svg viewBox="0 0 32 32" className="w-7 h-7" fill="none">
            <circle cx="16" cy="17" r="10.500" stroke="#2474bc" strokeWidth="7" />
            <path d="M7 17h19" stroke="#3c94dc" strokeWidth="4" />
            <path d="M18 21h13" stroke="#e6e2de" strokeWidth="4" />
            <path d="M4 29C0 24 12 6 27 3c3 0 3 2 2 4" stroke="#eebc3c" strokeWidth="2.500" />
          </svg>
        </button>
        <button aria-label="资源管理器" className="w-[50px] flex justify-center">
          <svg viewBox="0 0 32 32" className="w-8 h-8">
            <path d="M2 3h9l2 3h17v21H2z" fill="#f0e6a4" stroke="#d4c074" />
            <path d="M4 8h24v15H4z" fill="#fbf5c8" />
            <path d="M5 5h4M13 8h4M21 9h4" stroke="#7c7c64" strokeWidth="1.500" />
            <path d="M7 30v-9h18v9h-4v-5H11v5z" fill="#b4dcf4" stroke="#6cacd4" />
          </svg>
        </button>
        <button aria-label="媒体播放器" className="w-[50px] flex justify-center">
          <svg viewBox="0 0 32 32" className="w-7 h-7">
            <path d="M9 3h20v24H9z" fill="#8cc4ec" stroke="#4c90c8" />
            <path d="M6 4h20v24H6z" fill="#b4d8f0" stroke="#4c90c8" />
            <path d="M3 5h20v24H3z" fill="#d4e8f8" stroke="#4c90c8" />
            <circle cx="13" cy="17" r="8.500" fill="#ee8434" />
            <path d="M10 12l8 5-8 5z" fill="#fff" />
          </svg>
        </button>
        <button aria-label="Chrome" className="w-[50px] flex justify-center">
          <svg viewBox="0 0 32 32" className="w-8 h-8">
            <circle cx="16" cy="16" r="15" fill="#fbc92c" />
            <path d="M16 16l0 15A15 15 0 0 1 3 8.500L9.500 20z" fill="#2c9c50" />
            <path d="M16 9h13.300a15 15 0 0 0-26.300-.5L9.500 20z" fill="#dc4436" />
            <circle cx="16" cy="16" r="7.500" fill="#fff" />
            <circle cx="16" cy="16" r="5.800" fill="#3c7cec" />
          </svg>
        </button>
        <button aria-label="360浏览器" className="w-[50px] flex justify-center">
          <svg viewBox="0 0 32 32" className="w-7 h-7" fill="none">
            <circle cx="16" cy="17" r="10.500" stroke="#6cc83c" strokeWidth="6" />
            <path d="M7 17h19" stroke="#6cc83c" strokeWidth="4" />
            <path d="M18 21h13" stroke="#e6e2de" strokeWidth="4" />
            <path d="M3 27C2 22 14 6 27 3" stroke="#9ce468" strokeWidth="2.500" />
          </svg>
        </button>
        <button aria-label="MetaTrader" className="w-12 h-[37px] flex items-center justify-center bg-white border border-[#55524f] border-r-white border-b-white">
          <MetaLogo size="w-[31px] h-[31px]" />
        </button>
      </div>
    </div>
    <div className="flex items-center">
      <span className="pr-3">CH</span>
      <svg viewBox="0 0 16 14" className="w-4 h-3.5 mr-3"><path d="M2 5h13l-1 8H1z" fill="#f4f2f0" stroke="#8c8884" /><path d="M4 8h9M4 10.500h8M9 5l4-4" stroke="#8c8884" strokeDasharray="2 1" /></svg>
      <span className="w-4 h-4 mr-3 rounded-full bg-[#2c2c8c] text-white text-center leading-4 font-bold">?</span>
      <span className="flex flex-col items-center gap-2 mr-2">
        <svg viewBox="0 0 8 8" className="w-2 h-2" fill="none" stroke="#111"><path d="M2.500 2V.5h5v4H6M.5 3h5v4h-5z" /></svg>
        <Caret />
      </span>
      <p className="w-[66px] text-center leading-[13px]">67℃<br />CPU温度</p>
      <div className="flex items-center h-[38px] ml-1 pl-1.5 border border-[#a8a49f] border-r-white border-b-white">
        <svg viewBox="0 0 8 10" className="w-2 h-2.5 mr-2" fill="none" stroke="#111"><path d="M1 4l3-3 3 3M1 9l3-3 3 3" /></svg>
        <svg viewBox="0 0 16 18" className="w-4 h-[18px] mr-2"><path d="M2 3h6v13H2z" fill="#fff" stroke="#666" /><path d="M8 5h6v4l-3 3-3-3zM9 2v3M13 2v3M11 12v4H5" fill="#ddd" stroke="#555" /></svg>
        <svg viewBox="0 0 18 18" className="w-[18px] h-[18px] mr-2"><path d="M2 6h3l4-4v13l-4-4H2z" fill="#eee" stroke="#888" /><circle cx="12.500" cy="13" r="4" fill="#fff" stroke="#d03c3c" strokeWidth="1.600" /><path d="M10 10.500l5 5" stroke="#d03c3c" strokeWidth="1.600" /></svg>
        <p className="w-16 text-center leading-4">11:57<br />2024/7/23</p>
        <svg viewBox="0 0 16 14" className="w-4 h-3.5"><path d="M1 1h14v9H1z" fill="#3c6cc0" stroke="#8cb0e0" /><path d="M4 12.500h8" stroke="#557" strokeWidth="2" /></svg>
      </div>
    </div>
  </div>
);

/* ---------- remote-control overlays ---------- */

const SignalBadge = () => (
  <div className="absolute left-[144px] top-[60px] w-14 h-[60px] rounded-md bg-[#2c2c2e]/90 flex items-end justify-center gap-1.5 pb-3.5">
    <span className="w-1.5 h-3.5 rounded-sm bg-[#1fc26b]" />
    <span className="w-1.5 h-[22px] rounded-sm bg-[#1fc26b]" />
    <span className="w-1.5 h-[30px] rounded-sm bg-[#1fc26b]" />
  </div>
);

const RemoteControls = () => (
  <div className="absolute right-12 top-[864px] w-[277px] h-[120px] rounded-[60px] bg-[#262626]/95 flex">
    <button aria-label="返回" className="w-[139px] pl-4 flex items-center justify-center border-r border-[#4a4a4a]">
      <svg viewBox="0 0 24 42" className="w-6 h-[42px]"><path d="M21 3L3 21l18 18" fill="none" stroke="#fff" strokeWidth="4" strokeLinecap="round" strokeLinejoin="round" /></svg>
    </button>
    <button aria-label="键盘" className="flex-1 pr-4 flex items-center justify-center">
      <svg viewBox="0 0 64 44" className="w-16 h-11" fill="none" stroke="#fff" strokeWidth="4" strokeLinecap="round">
        <rect x="2" y="2" width="60" height="40" rx="4" />
        <path d="M14 17h6M28 17h7M43 17h7M14 28h36" />
      </svg>
    </button>
  </div>
);

const Watermark = () => (
  <p className="absolute right-7 top-[992px] flex items-center gap-3 text-white text-[38px] leading-[48px] font-['Noto_Sans_CJK_SC',sans-serif]">
    <svg viewBox="0 0 38 44" className="w-[38px] h-11 mt-1">
      <path d="M19 1c13 0 18 4 18 18 0 13-4 17-14 18l-5 7-1-7C5 37 1 33 1 19 1 5 6 1 19 1z" fill="#fff" />
      <path d="M29 10c-6-2-9 1-10 7l-3 20M11 21h15" stroke="#000" strokeWidth="4.500" fill="none" />
    </svg>
    @好好休息
  </p>
);

const App = () => (
  <div className="relative min-h-screen bg-black pl-[163px] pr-[318px] flex flex-col">
    <main className={clsx('flex-1 flex flex-col bg-[#e6e2de] text-black', MONO)}>
      <TitleBar />
      <MenuBar />
      <DrawToolbar />
      <MainToolbar />
      <div className="flex-1 flex">
        <MarketWatch />
        <ChartPanel />
      </div>
      <Terminal />
      <StatusBar />
      <TaskBar />
    </main>
    <SignalBadge />
    <button aria-label="展开" className="absolute right-[318px] top-[834px] w-6 h-8 rounded-l-full bg-[#5a9cf2] flex items-center justify-center">
      <svg viewBox="0 0 8 14" className="w-2 h-3.5"><path d="M6 2L2 7l4 5" fill="none" stroke="#fff" strokeWidth="2" /></svg>
    </button>
    <RemoteControls />
    <Watermark />
  </div>
);

export default App;
